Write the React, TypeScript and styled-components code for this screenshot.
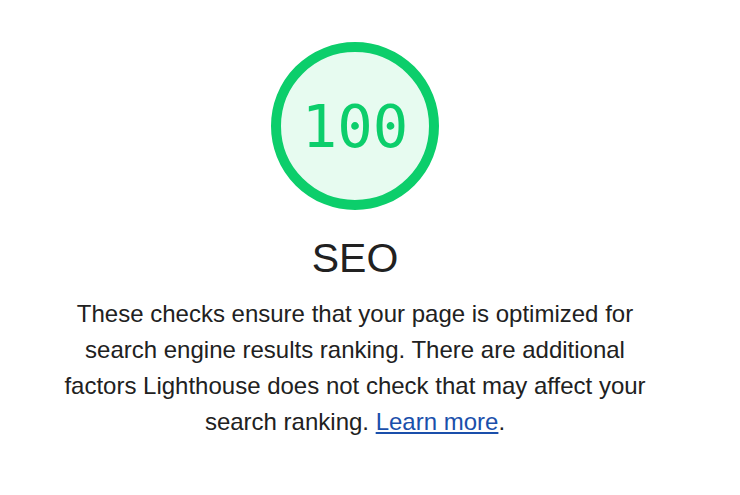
import React from "react";
import styled, { createGlobalStyle } from "styled-components";

const GlobalStyle = createGlobalStyle`
  html, body {
    margin: 0;
    padding: 0;
    background: #ffffff;
  }
  body {
    font-family: "Liberation Sans", Arial, Helvetica, sans-serif;
    color: #212121;
  }
`;

const Wrapper = styled.div`
  width: 600px;
  margin-left: 55px;
  padding-top: 42px;
  display: flex;
  flex-direction: column;
  align-items: center;
`;

const Gauge = styled.div<{ $size: number }>`
  width: ${(p) => p.$size}px;
  height: ${(p) => p.$size}px;
  box-sizing: border-box;
  border-radius: 50%;
  border: 10px solid #0cce6b;
  background: #e7fbf0;
  display: flex;
  align-items: center;
  justify-content: center;
`;

const Score = styled.span`
  font-family: "DejaVu Sans Mono", "Liberation Mono", monospace;
  font-variant-numeric: slashed-zero;
  font-size: 59px;
  color: #0cce6b;
  line-height: 1;
`;

const Title = styled.h2`
  margin: 24px 0 0;
  font-size: 41px;
  font-weight: 400;
  line-height: 48px;
  color: #212121;
`;

const Description = styled.p`
  width: 596px;
  margin: 14px 0 0;
  font-size: 24px;
  line-height: 36px;
  text-align: center;
  color: #212121;
`;

const LearnMore = styled.a`
  color: #1a4fab;
  text-decoration: underline;
`;

export default function App() {
  return (
    <>
      <GlobalStyle />
      <Wrapper>
        <Gauge $size={168}>
          <Score>100</Score>
        </Gauge>
        <Title>SEO</Title>
        <Description>
          These checks ensure that your page is optimized for search engine
          results ranking. There are additional factors Lighthouse does not
          check that may affect your search ranking.{" "}
          <LearnMore href="#">Learn more</LearnMore>.
        </Description>
      </Wrapper>
    </>
  );
}
